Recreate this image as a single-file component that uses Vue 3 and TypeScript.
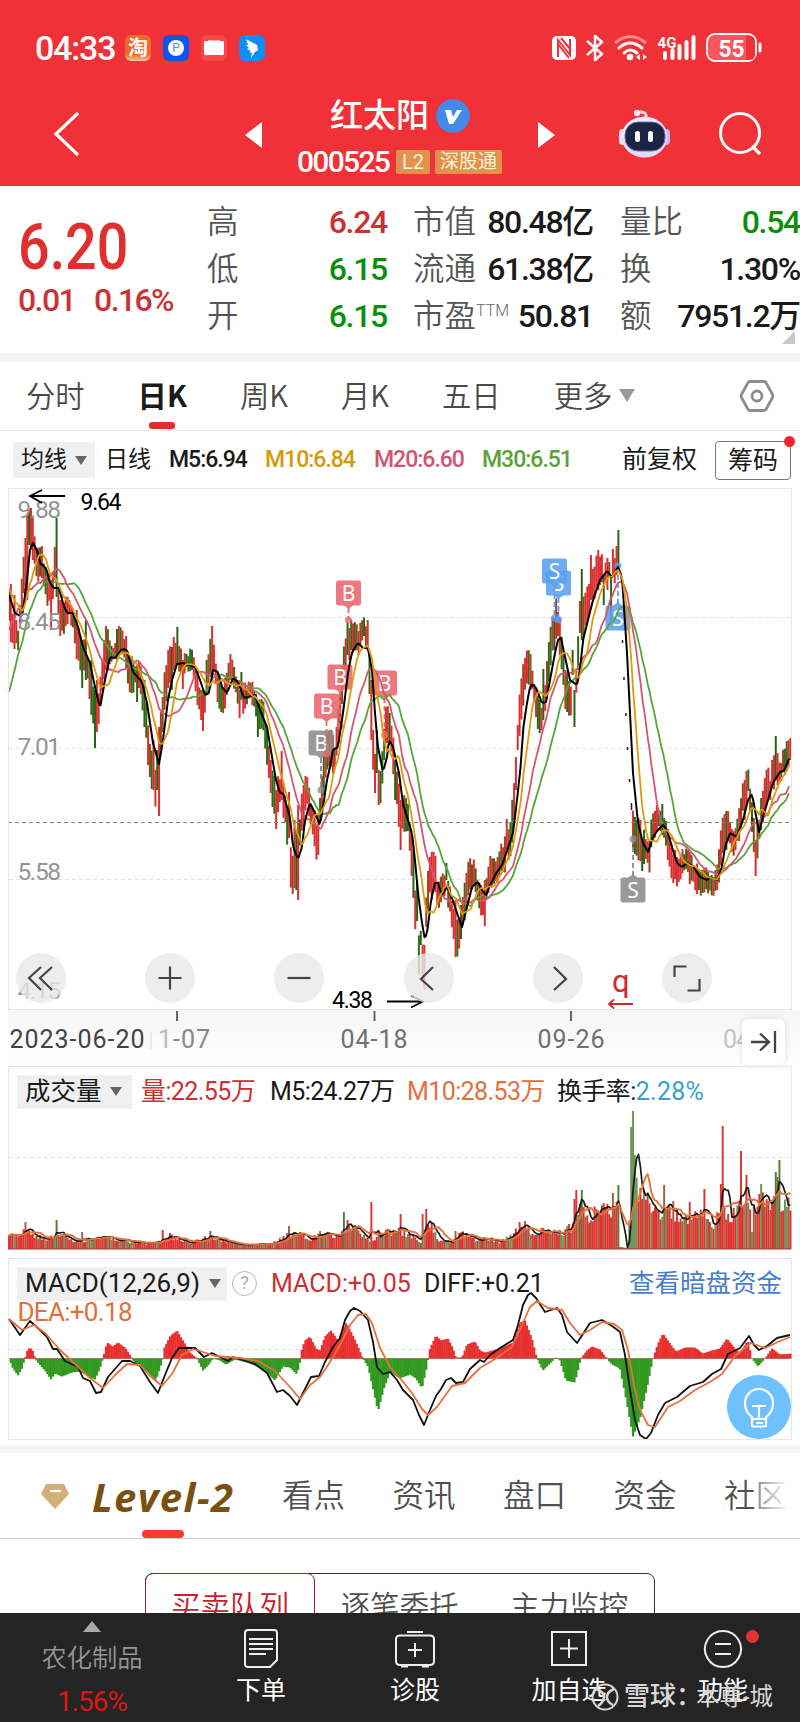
<template>
  <div class="page">
    <header class="header">
      <div class="status">
        <span class="clock">04:33</span>
        <span class="app-icon taobao">淘</span>
        <span class="app-icon parking"><i>P</i></span>
        <span class="app-icon video">
          <svg width="26" height="26" viewBox="0 0 26 26">
            <path d="M3 6q3 1 5-1q5 1 10 0q2 2 5 1v13q-2 2-4 1H7q-3 1-4-1z" fill="#fff" />
          </svg>
        </span>
        <span class="app-icon ding">
          <svg width="26" height="26" viewBox="0 0 26 26">
            <path d="M7 4l11 6 1 5-3 2-4 6 1-5-3-1 2-1-4-2 2-1-3-3 2 0z" fill="#fff" />
          </svg>
        </span>
        <svg class="status-right" width="212" height="30" viewBox="551 33 212 30">
          <rect x="552" y="36" width="24" height="24" rx="5" fill="#fff" />
          <path d="M558 57V40l12 15V39M558 44l11 14M561 38l10 12" fill="none" stroke="#f03138" stroke-width="2" />
          <path d="M587 41l15 13-7 6V36l7 6-15 13" fill="none" stroke="#fff" stroke-width="2.5" stroke-linejoin="round" />
          <path d="M615 43q15-13 31 0" fill="none" stroke="#f98a8d" stroke-width="3" />
          <path d="M619 48q11-10 23 0M624 53q6-6 13 0" fill="none" stroke="#fff" stroke-width="3" stroke-linecap="round" />
          <circle cx="630" cy="57" r="3.3" fill="#fff" />
          <path d="M640 54l-4 3 4 3zM643 54l4 3-4 3z" fill="#fff" />
          <text x="657.500" y="48" class="net" textLength="19" lengthAdjust="spacingAndGlyphs">4G</text>
          <path d="M665 53v5M672.500 50v8M679.500 46v12M686.500 42v16M693.500 37v21" stroke="#fff" stroke-width="4" stroke-linecap="round" />
          <rect x="707" y="34" width="49" height="27" rx="8" fill="#f6565c" stroke="#fff" stroke-width="1.800" />
          <path d="M746 36h3q6 0 6 6v12q0 6-6 6h-3z" fill="#f03138" />
          <path d="M760 44v7" stroke="#fff" stroke-width="3" stroke-linecap="round" />
          <text x="718.500" y="57" class="battery" textLength="26" lengthAdjust="spacingAndGlyphs">55</text>
        </svg>
      </div>
      <div class="titlebar">
        <svg class="back" width="28" height="48" viewBox="0 0 28 48">
          <path d="M25 3L3 24l22 21" fill="none" stroke="#fff" stroke-width="3.200" />
        </svg>
        <svg class="prev" width="17" height="26" viewBox="0 0 17 26"><path d="M17 0v26L0 13z" fill="#fff" /></svg>
        <div class="title">
          <div class="name">
            红太阳
            <svg width="34" height="34" viewBox="0 0 34 34">
              <circle cx="17" cy="17" r="16.800" fill="#438ae8" />
              <path d="M9 11h6l2 7 4-7h5l-9 14h-4z" fill="#fff" />
            </svg>
          </div>
          <div class="code">
            <b>000525</b><span class="tag l2">L2</span><span class="tag">深股通</span>
          </div>
        </div>
        <svg class="next" width="17" height="26" viewBox="0 0 17 26"><path d="M0 0v26l17-13z" fill="#fff" /></svg>
        <svg class="robot" width="54" height="50" viewBox="0 0 54 50">
          <path d="M28 9V6q-1-3-6-3" fill="none" stroke="#fbd3e0" stroke-width="3" stroke-linecap="round" />
          <circle cx="19" cy="4" r="3.200" fill="#ffe9ef" />
          <rect x="1" y="20" width="9" height="16" rx="4" fill="#f3e4f8" />
          <rect x="43" y="20" width="9" height="16" rx="4" fill="#c8b5f2" />
          <ellipse cx="26.500" cy="28" rx="23" ry="20.500" fill="#e4dcfa" />
          <ellipse cx="26" cy="25.500" rx="21" ry="17" fill="#faf5ff" opacity=".7" />
          <rect x="7" y="13" width="40" height="29" rx="13" fill="#1c2444" stroke="#6e6cb8" />
          <rect x="17" y="22" width="5" height="11" rx="2.500" fill="#fff" />
          <rect x="30" y="22" width="5" height="11" rx="2.500" fill="#fff" />
        </svg>
        <svg class="search" width="46" height="46" viewBox="0 0 46 46">
          <circle cx="22" cy="22" r="19.500" fill="none" stroke="#fff" stroke-width="3" />
          <path d="M34 35l8 8" stroke="#fff" stroke-width="3.200" />
        </svg>
      </div>
    </header>

    <section class="quote">
      <div class="price">
        <div class="last">6.20</div>
        <div class="change"><span>0.01</span><span>0.16%</span></div>
      </div>
      <div v-for="(col, i) in stats" :key="i" class="stat-col" :class="'col' + i">
        <div v-for="s in col" :key="s.label" class="stat">
          <span class="label">{{ s.label }}<sup v-if="s.sup">{{ s.sup }}</sup></span>
          <span class="value" :class="s.tone">{{ s.value }}</span>
        </div>
      </div>
      <i class="corner"></i>
    </section>

    <nav class="periods">
      <span v-for="p in periods" :key="p" :class="{ active: p === '日K' }">{{ p }}</span>
      <i class="caret"></i>
      <svg width="34" height="32" viewBox="0 0 34 32">
        <path d="M10 1.500h14q1 0 2 1l6.500 12q.7 1.500 0 3L26 29.500q-1 1-2 1H10q-1 0-2-1L1.500 17.500q-.7-1.500 0-3L8 2.500q1-1 2-1z" fill="none" stroke="#8c8c8c" stroke-width="2.800" />
        <circle cx="17" cy="16" r="5" fill="none" stroke="#8c8c8c" stroke-width="2.800" />
      </svg>
    </nav>

    <div class="ma-row">
      <span class="picker">均线<i></i></span>
      <span class="day">日线</span>
      <span class="m5">M5:6.94</span>
      <span class="m10">M10:6.84</span>
      <span class="m20">M20:6.60</span>
      <span class="m30">M30:6.51</span>
      <span class="adjust">前复权</span>
      <span class="chips">筹码<i></i></span>
    </div>

    <div class="kline">
      <svg width="784" height="522" viewBox="8 488 784 522">
        <g stroke="#e2e2e2" stroke-dasharray="4 3">
          <path d="M9 617.500H791M9 748.500H791M9 879.500H791" />
        </g>
        <path v-for="(c, i) in candles" :key="i" :d="`M${c.x} ${c.top}V${c.bottom}`" :stroke="c.color" stroke-width="2" />
        <path d="M8 822.500H791" stroke="#8b7d63" stroke-dasharray="4 3" />
        <path d="M622.500 640v3M624 677v3M626 713v3M627.500 747v3M629.500 779v3M631.500 803v7M752 817v4" stroke="#222" stroke-width="1.500" />
        <g v-for="m in markers" :key="m.x + '-' + m.y">
          <path :d="`M${m.x} ${m.up ? m.y - 14 : m.y + 15}V${m.stem}`" :stroke="m.fill" stroke-width="1.800" stroke-dasharray="5 3" />
          <circle :cx="m.x" :cy="m.stem" r="3.500" :fill="m.fill" opacity=".8" />
          <rect :x="m.x - 12.500" :y="m.y - 12.500" width="25" height="25" rx="2.500" :fill="m.fill" opacity=".88" />
          <path :d="m.up ? `M${m.x - 5} ${m.y - 12}l5-4l5 4z` : `M${m.x - 5} ${m.y + 12}l5 4l5-4z`" :fill="m.fill" opacity=".88" />
          <text :x="m.x" :y="m.y + 7.500" class="mark">{{ m.text }}</text>
        </g>
        <g fill="none" stroke-width="1.800" stroke-linejoin="round">
          <path :d="maPath(6)" stroke="#55a538" />
          <path :d="maPath(4)" stroke="#d5576d" />
          <path :d="maPath(1)" stroke="#000" stroke-width="2" />
          <path :d="maPath(2)" stroke="#dd9a0c" />
        </g>
        <g class="scale">
          <text v-for="l in priceLabels" :key="l.text" x="17.500" :y="l.y" textLength="43.500">{{ l.text }}</text>
        </g>
        <g class="extreme">
          <path d="M30 496h35M42 490l-12 6 12 7" />
          <text x="80.500" y="509.500" textLength="41">9.64</text>
          <path d="M387 1001.500h35M411 995.500l12 6-12 6" />
          <text x="332" y="1008" textLength="41">4.38</text>
        </g>
        <text x="612" y="992" class="q">q</text>
        <path d="M633 1004h-24M614 999.500l-5 4.500 5 4.500" fill="none" stroke="#cf2a2c" stroke-width="1.800" />
      </svg>
      <div class="controls">
        <span v-for="d in controls" :key="d">
          <svg width="50" height="50" viewBox="0 0 50 50"><path :d="d" fill="none" stroke="#444" stroke-width="2.200" /></svg>
        </span>
      </div>
    </div>

    <div class="axis">
      <svg width="792" height="56" viewBox="8 1010 792 56">
        <path d="M177 1011v10M374.500 1011v10M571 1011v10" stroke="#666" stroke-width="2" />
        <text x="9.500" y="1048" textLength="135" fill="#444">2023-06-20</text>
        <path d="M151 1032v17" stroke="#ddd" />
        <text x="158" y="1048" textLength="52"><tspan fill="#bbb">1</tspan><tspan fill="#888">-07</tspan></text>
        <text x="340.500" y="1048" textLength="67" fill="#707070">04-18</text>
        <text x="537.500" y="1048" textLength="67" fill="#707070">09-26</text>
        <text x="723" y="1048" textLength="27" fill="#c4c4c4">04</text>
      </svg>
      <span class="jump">
        <svg width="26" height="24" viewBox="0 0 26 24"><path d="M0 12h18M9 3.500l9 8.500-9 8.500M24 1v22" fill="none" stroke="#444" stroke-width="2.300" /></svg>
      </span>
    </div>

    <div class="volume">
      <div class="legend">
        <span class="picker">成交量<i></i></span>
        <span class="red v1">量:22.55万</span>
        <span class="v2">M5:24.27万</span>
        <span class="orange v3">M10:28.53万</span>
        <span class="v4">换手率:<em>2.28%</em></span>
      </div>
      <svg width="784" height="143" viewBox="8 1107 784 143">
        <path d="M9 1157.500H791" stroke="#e2e2e2" stroke-dasharray="4 3" />
        <path v-for="(v, i) in volumes" :key="i" :d="`M${v.x} 1249V${1249 - v.h}`" :stroke="v.color" stroke-width="1.950" />
        <path d="M8 1249h783" stroke="#a83a32" />
        <path :d="volumePath(5)" fill="none" stroke="#1a1a1a" stroke-width="1.700" stroke-linejoin="round" />
        <path :d="volumePath(10)" fill="none" stroke="#e8703a" stroke-width="1.900" stroke-linejoin="round" />
      </svg>
    </div>

    <div class="macd">
      <div class="legend">
        <span class="picker">MACD(12,26,9)<i></i></span>
        <span class="help">?</span>
        <span class="red v1">MACD:+0.05</span>
        <span class="v2">DIFF:+0.21</span>
        <a>查看暗盘资金</a>
      </div>
      <svg width="784" height="181" viewBox="8 1258 784 181">
        <path d="M9 1349.500H791" stroke="#e2e2e2" stroke-dasharray="4 3" />
        <path v-for="(b, i) in histogram" :key="i" :d="`M${b.x} 1358.500v${-b.h}`" :stroke="b.h > 0 ? '#e82f30' : '#31991f'" stroke-width="2.300" />
        <path d="M9 1358.500H791" stroke="#7d4a1c" stroke-width=".8" opacity=".6" />
        <text x="17.500" y="1321" class="dea" textLength="115">DEA:+0.18</text>
        <path :d="linePath(diff)" fill="none" stroke="#111" stroke-width="1.800" stroke-linejoin="round" />
        <path :d="linePath(dea)" fill="none" stroke="#e8703a" stroke-width="1.800" stroke-linejoin="round" />
      </svg>
      <span class="bulb">
        <svg width="64" height="64" viewBox="0 0 64 64">
          <circle cx="32" cy="32" r="32" fill="#6ec1fc" />
          <path d="M25 50V42q-7-5-7-14a14 14 0 0 1 28 0q0 9-7 14v8q0 1.500-1.500 1.500h-11q-1.500 0-1.500-1.500zM25 31h14M32 31v13M26 44h12M29 48h7" fill="none" stroke="#fff" stroke-width="2.200" />
        </svg>
      </span>
    </div>

    <nav class="sections">
      <svg width="28" height="26" viewBox="0 0 28 26">
        <path d="M5 0h18l5 10-14 15L0 10z" fill="#d2ae7a" />
        <path d="M9 7h11" stroke="#fff" stroke-width="2.200" />
      </svg>
      <span class="level">Level-2</span>
      <span v-for="t in tabs" :key="t" class="tab">{{ t }}</span>
    </nav>

    <div class="panel">
      <div class="segment">
        <span class="on">买卖队列</span><span>逐笔委托</span><span>主力监控</span>
      </div>
    </div>

    <footer class="bar">
      <div class="sector">
        <i></i>
        <span>农化制品</span>
        <b>1.56%</b>
      </div>
      <div v-for="a in actions" :key="a.text" class="action">
        <svg width="40" height="42" viewBox="0 0 40 42"><path :d="a.icon" fill="none" stroke="#eee" stroke-width="2" /></svg>
        <span>{{ a.text }}</span>
        <i v-if="a.dot"></i>
      </div>
      <div class="watermark">
        <svg width="28" height="28" viewBox="0 0 28 28">
          <circle cx="14" cy="14" r="12.500" fill="none" stroke="#d8d8d8" stroke-width="2" />
          <path d="M5 6q8 3 8 8t-6 9M23 6q-7 3-7 8t6 8" fill="none" stroke="#d8d8d8" stroke-width="2.500" />
        </svg>
        <span class="brand">雪球：</span><span class="user">本尊-城</span>
      </div>
    </footer>
  </div>
</template>

<script setup lang="ts">
type Point = [number, number];

interface Stat {
  label: string;
  value: string;
  tone?: string;
  sup?: string;
}

interface Bar {
  x: number;
  top: number;
  bottom: number;
  color: string;
}

const STEP = 1.83; // 每根K线的宽度
const COUNT = 428;

const stats: Stat[][] = [
  [
    { label: "高", value: "6.24", tone: "up" },
    { label: "低", value: "6.15", tone: "down" },
    { label: "开", value: "6.15", tone: "down" },
  ],
  [
    { label: "市值", value: "80.48亿" },
    { label: "流通", value: "61.38亿" },
    { label: "市盈", value: "50.81", sup: "TTM" },
  ],
  [
    { label: "量比", value: "0.54", tone: "down" },
    { label: "换", value: "1.30%" },
    { label: "额", value: "7951.2万" },
  ],
];

const periods = ["分时", "日K", "周K", "月K", "五日", "更多"];
const tabs = ["看点", "资讯", "盘口", "资金", "社区"];

const priceLabels = [
  { text: "9.88", y: 517.5 },
  { text: "8.45", y: 630 },
  { text: "7.01", y: 755 },
  { text: "5.58", y: 879.5 },
  { text: "4.15", y: 998.5 },
];

const controls = [
  "M25 14L13 25l12 12M36 14L24 25l12 12",
  "M25 13.500v23M13.500 25h23",
  "M13.500 25h23",
  "M29 14L17 26l12 11",
  "M21 14l12 12-12 11",
  "M12.500 24V13.500h12M37.500 26v11.500h-12",
];

const actions = [
  { text: "下单", icon: "M7 2h26q3 0 3 3v27l-7 7H7q-3 0-3-3V5q0-3 3-3zM8 11h24M8 16h24M8 21h24M8 26h17" },
  { text: "诊股", icon: "M5 7.500h30q4 0 4 4V33q0 4-4 4H5q-4 0-4-4V11.500q0-4 4-4zM12 4h16M20 15v14M13 22h14M6 38.500h7M27 38.500h7" },
  { text: "加自选", icon: "M3 4h34v33H3zM20 11v19M11 20.500h18" },
  { text: "功能", icon: "M20 3a18 18 0 1 1-.1 0zM12 16h16M12 26h16", dot: true },
];

const RED = "#ed656b";
const GREY = "#8b8b8b";
const BLUE = "#5b9ff0";
const markers = [
  { x: 340, y: 677, text: "B", fill: RED, stem: 726 },
  { x: 321, y: 743, text: "B", fill: GREY, stem: 790 },
  { x: 326.5, y: 706, text: "B", fill: RED, stem: 754 },
  { x: 348.5, y: 593, text: "B", fill: RED, stem: 620 },
  { x: 384.5, y: 683, text: "B", fill: RED, stem: 735 },
  { x: 558.5, y: 583, text: "S", fill: BLUE, stem: 620 },
  { x: 554.5, y: 571, text: "S", fill: BLUE, stem: 618 },
  { x: 618, y: 618, text: "S", fill: BLUE, up: true, stem: 566 },
  { x: 633, y: 890, text: "S", fill: GREY, up: true, stem: 839 },
];

// 五日均线的关键点，其余均线由它推算
const m5: Point[] = [
  [-36, 838], [-27, 790], [-18, 695], [-9, 640], [0, 582], [9, 595], [15, 613], [22, 617], [27, 580], [30, 550],
  [33, 543], [37, 550], [40, 563], [46, 568], [50, 583], [54, 588], [59, 588], [63, 603], [67, 613], [73, 613],
  [78, 627], [83, 647], [90, 663], [95, 687], [100, 708], [105, 680], [110, 657], [115, 658], [122, 649], [127, 650],
  [133, 672], [142, 682], [147, 703], [153, 743], [159, 764], [163, 740], [168, 700], [172, 680], [177, 664], [183, 663],
  [195, 667], [200, 680], [205, 695], [209, 693], [213, 670], [218, 672], [222, 687], [227, 693], [233, 678], [238, 682],
  [244, 698], [255, 695], [260, 710], [267, 727], [272, 757], [276, 780], [280, 793], [283, 793], [290, 817], [293, 847],
  [298, 859], [302, 847], [305, 820], [310, 803], [315, 813], [320, 825], [323, 807], [327, 780], [330, 767], [333, 750],
  [338, 747], [343, 713], [348, 673], [352, 652], [358, 643], [363, 648], [368, 648], [372, 670], [375, 713], [378, 747],
  [383, 772], [387, 757], [389, 740], [393, 747], [399, 773], [403, 804], [407, 817], [412, 833], [415, 860], [418, 893],
  [422, 923], [425, 940], [428, 927], [431, 900], [435, 883], [438, 883], [442, 895], [447, 887], [452, 898], [457, 913],
  [462, 927], [467, 907], [472, 887], [478, 882], [482, 890], [486, 895], [490, 885], [497, 872], [502, 865], [508, 848],
  [513, 833], [517, 800], [521, 763], [523, 730], [527, 703], [530, 687], [533, 684], [537, 690], [542, 703], [546, 702],
  [550, 680], [555, 653], [558, 640], [561, 638], [565, 657], [570, 680], [577, 685], [580, 670], [583, 640], [588, 620],
  [593, 600], [600, 580], [607, 571], [612, 577], [618, 567], [622, 577], [624, 607], [627, 653], [630, 713], [633, 773],
  [635, 793], [638, 823], [643, 843], [648, 852], [653, 837], [658, 830], [663, 825], [667, 830], [672, 847], [677, 863],
  [682, 867], [687, 863], [693, 866], [700, 877], [707, 880], [710, 877], [717, 880], [722, 867], [725, 847], [730, 833],
  [737, 837], [743, 820], [748, 800], [752, 794], [755, 810], [759, 832], [763, 817], [768, 800], [773, 783], [780, 772],
  [784, 771], [790, 756], [800, 745],
];

// 影线特别长的K线：x, 最高, 最低, 是否上涨
const spikes: [number, number, number, boolean][] = [
  [11, 584, 642, true], [15, 595, 649, true], [26, 538, 600, true], [28, 515, 600, true], [30, 509, 545, false], [32, 518, 560, true],
  [42, 546, 578, true], [55, 547, 580, true], [57, 518, 597, false], [51, 580, 630, true], [60, 600, 636, true], [77, 610, 659, true], [82, 640, 688, false],
  [86, 620, 680, false], [91, 660, 715, false], [95, 690, 748, false], [97, 680, 732, true], [106, 626, 670, true], [117, 629, 660, false],
  [126, 636, 668, true], [137, 665, 702, false], [144, 680, 727, false], [153, 740, 790, true], [159, 727, 816, true], [157, 750, 790, false],
  [172, 647, 690, false], [177, 627, 665, false], [186, 654, 667, false], [182, 660, 689, true], [201, 690, 720, true], [203, 690, 731, true], [206, 660, 695, false],
  [212, 626, 680, true], [230, 654, 680, true], [241, 672, 700, false], [239, 690, 718, true], [257, 700, 737, false],
  [271, 760, 793, true], [276, 790, 829, true], [281, 751, 800, true], [289, 792, 838, true], [294, 820, 888, true], [296, 830, 890, false], [298, 805, 900, true],
  [303, 785, 830, true], [315, 810, 846, true], [319, 815, 855, true],
  [347, 622, 655, false], [350, 628, 660, true], [358, 631, 655, true], [367, 620, 650, true], [372, 680, 740, true], [376, 730, 773, false],
  [379, 770, 805, true], [389, 713, 745, false], [396, 760, 800, false], [401, 800, 850, true], [414, 850, 898, false], [418, 880, 921, false], [420, 931, 945, false],
  [423.5, 945, 989, true], [431, 852, 900, true], [436, 856, 892, true], [456, 900, 957, true], [461, 905, 939, false],
  [447, 863, 880, false], [484, 880, 926, true], [490, 856, 885, true], [507, 819, 850, true],
  [518, 725, 750, true], [516, 757, 790, true], [531, 654, 690, true], [540, 700, 733, false], [544, 669, 720, false],
  [554, 618, 650, false], [560, 617, 655, true], [565, 670, 709, true], [573, 650, 675, false], [575, 690, 727, false],
  [580, 601, 633, true], [582, 569, 640, false], [591, 555, 600, true], [598, 550, 590, true], [604, 575, 605, false], [607, 558, 590, true], [611, 575, 620, false],
  [613, 549, 575, true], [617, 546, 575, true], [619, 530, 567, false],
  [642, 840, 871, false], [663, 804, 835, false], [675, 850, 879, true], [689, 852, 884, true], [702, 870, 893, false],
  [726, 811, 850, false], [745, 780, 820, true], [747, 771, 805, true], [755, 840, 876, true],
  [770, 781, 800, true], [775, 736, 780, false], [778, 753, 785, true], [790, 738, 760, true],
];

const volumeShape: Point[] = [
  [9, 15], [27, 17], [45, 9], [57, 18], [75, 7], [100, 11], [115, 10], [140, 6], [155, 6], [170, 12],
  [190, 7], [210, 12], [220, 9], [240, 4], [270, 5], [285, 12], [295, 16], [310, 10], [325, 16], [340, 12],
  [348, 25], [357, 18], [370, 8], [385, 18], [400, 17], [415, 13], [420, 5], [425, 22], [432, 22], [440, 8],
  [450, 6], [460, 17], [475, 9], [490, 11], [500, 6], [515, 16], [525, 22], [535, 13], [545, 20], [565, 17],
  [571, 22], [578, 42], [590, 33], [600, 36], [612, 38], [617.5, 38], [619, 2], [629, 1], [630.5, 105], [634, 90],
  [637, 55], [642, 62], [650, 40], [660, 30], [670, 38], [685, 30], [700, 33], [715, 25], [723, 46], [730, 30],
  [740, 40], [747, 50], [751, 40], [760, 48], [770, 42], [780, 50], [792, 44],
];

const volumeSpikes: Point[] = [
  [26, 27], [57, 29], [82, 17], [162, 19], [170, 16], [210, 18], [289, 23], [321, 18], [343, 37], [347, 29], [372, 47],
  [401, 35], [423, 35], [427, 40], [455, 18], [525, 28], [519, 27], [574, 50], [576, 59], [582, 59], [604, 46], [613, 56],
  [618, 64], [631, 122], [633, 138], [635, 94], [664, 64], [673, 48], [690, 47], [704, 60], [720.5, 65], [722.3, 123],
  [740.5, 98], [746, 74], [752, 17], [761, 65], [775, 77], [777, 72], [779, 89],
];

const macdShape: Point[] = [
  [9, 0], [13, -10], [18, -17], [22, -10], [25, 0], [28, 10], [32, 10], [35, 1], [37, -3], [45, -12], [51, -21],
  [55, -15], [62, -18], [72, -14], [80, -13], [88, -18], [95, -21], [100, -10], [103, 0], [107, 16], [113, 12],
  [118, 16], [125, 11], [131, 2], [135, -5], [142, -8], [150, -16], [156, -22], [160, -10], [163, 0], [164, 10],
  [170, 22], [177, 28], [183, 18], [190, 6], [197, 0], [203, -12], [209, -6], [213, 0], [220, -2], [226, -6],
  [235, -1], [247, -4], [262, -10], [275, -22], [283, -8], [290, -9], [297, -16], [300, -4], [302, 10], [305, 18],
  [310, 22], [316, 10], [320, 8], [325, 22], [331, 28], [338, 18], [346, 36], [352, 25], [358, 12], [363, 0],
  [368, -8], [373, -30], [378, -53], [384, -30], [390, -14], [400, -20], [410, -16], [416, -20], [422, -30],
  [427, -8], [430, 10], [436, 23], [441, 18], [448, 20], [453, 10], [456, 1], [462, 1], [467, 14], [475, 17],
  [480, 8], [485, 6], [500, 10], [513, 16], [520, 36], [525, 38], [532, 20], [537, 0], [543, -12], [550, -5],
  [556, 1], [560, -2], [566, -22], [575, -24], [581, 0], [587, 8], [592, 12], [600, 9], [606, 1], [612, -6],
  [620, -10], [625, -35], [633, -78], [640, -60], [648, -25], [653, 0], [658, 15], [663, 25], [670, 15],
  [676, 7], [685, 11], [695, 11], [703, 5], [712, 8], [720, 10], [727, 20], [735, 10], [740, 6], [748, 18],
  [752, 0], [758, -8], [765, 0], [772, 10], [780, 4], [792, 5],
];

const diff: Point[] = [
  [9, 1319], [20, 1335], [30, 1321], [40, 1330], [47, 1337], [53, 1349], [57, 1349], [65, 1361], [78, 1367], [83, 1378],
  [90, 1381], [96, 1393], [101, 1392], [108, 1377], [115, 1369], [122, 1361], [130, 1361], [140, 1366], [150, 1382],
  [158, 1393], [165, 1375], [172, 1358], [179, 1348], [195, 1348], [204, 1357], [212, 1353], [228, 1361], [233, 1357],
  [255, 1364], [267, 1373], [277, 1392], [283, 1390], [290, 1396], [297, 1405], [303, 1393], [311, 1377], [319, 1376],
  [325, 1362], [333, 1347], [340, 1338], [345, 1320], [350, 1311], [354, 1308], [360, 1311], [368, 1320], [373, 1342],
  [377, 1367], [383, 1374], [390, 1372], [397, 1380], [403, 1390], [413, 1400], [419, 1415], [424, 1425], [430, 1410],
  [436, 1396], [441, 1389], [446, 1380], [451, 1378], [456, 1383], [463, 1382], [470, 1369], [480, 1360], [484, 1362],
  [490, 1355], [500, 1348], [513, 1340], [518, 1325], [523, 1305], [528, 1295], [531, 1293], [536, 1298], [545, 1312],
  [557, 1308], [562, 1315], [567, 1332], [577, 1343], [583, 1334], [590, 1323], [602, 1320], [612, 1326], [620, 1332],
  [625, 1355], [630, 1390], [635, 1420], [640, 1435], [646, 1439], [651, 1433], [658, 1415], [665, 1403], [677, 1397],
  [690, 1386], [703, 1382], [712, 1374], [721, 1369], [728, 1354], [740, 1348], [749, 1336], [754, 1345], [759, 1350],
  [767, 1346], [777, 1338], [790, 1335],
];

const dea: Point[] = [
  [9, 1319], [22, 1330], [34, 1325], [45, 1333], [60, 1350], [75, 1364], [90, 1378], [103, 1388], [115, 1375],
  [127, 1364], [140, 1365], [150, 1376], [162, 1386], [172, 1374], [182, 1355], [193, 1349], [203, 1352], [215, 1356],
  [240, 1358], [258, 1361], [275, 1371], [290, 1387], [300, 1399], [310, 1385], [320, 1377], [330, 1362], [340, 1345],
  [350, 1325], [358, 1315], [366, 1314], [372, 1323], [380, 1348], [390, 1367], [400, 1378], [412, 1393], [422, 1409],
  [428, 1415], [437, 1407], [452, 1386], [465, 1383], [480, 1368], [495, 1359], [512, 1347], [522, 1325], [530, 1307],
  [537, 1301], [548, 1308], [562, 1310], [570, 1323], [580, 1335], [590, 1330], [602, 1322], [614, 1324], [622, 1330],
  [628, 1350], [634, 1385], [640, 1410], [648, 1425], [655, 1427], [668, 1407], [680, 1401], [695, 1390], [710, 1382],
  [722, 1374], [735, 1356], [751, 1343], [765, 1348], [778, 1342], [790, 1337],
];

// 线性插值
function at(points: Point[], x: number): number {
  if (x <= points[0][0]) return points[0][1];
  for (let i = 1; i < points.length; i++) {
    const [x1, y1] = points[i];
    if (x <= x1) {
      const [x0, y0] = points[i - 1];
      return y0 + ((y1 - y0) * (x - x0)) / (x1 - x0);
    }
  }
  return points[points.length - 1][1];
}

// 固定种子的伪随机数，保证每次绘制一致
function noise(n: number): number {
  const v = Math.sin(n * 127.1 + 11.7) * 43758.5453;
  return v - Math.floor(v);
}

function barX(i: number): number {
  return 9 + i * STEP;
}

function maPath(windows: number): string {
  let d = "";
  for (let x = 9; x <= 790; x += 1.5) {
    let sum = 0;
    for (let k = 0; k < windows; k++) sum += at(m5, x - k * 9.15);
    d += `${d ? "L" : "M"}${x} ${(sum / windows).toFixed(1)}`;
  }
  return d;
}

function linePath(points: Point[]): string {
  return points.map(([x, y], i) => `${i ? "L" : "M"}${x} ${y}`).join("");
}

function buildCandles(): Bar[] {
  const bars: Bar[] = [];
  for (let i = 0; i < COUNT; i++) {
    const x = barX(i);
    const green = noise(i) < 0.3;
    const spike = spikes.find((s) => Math.abs(s[0] - x) < STEP / 2);
    if (spike) {
      bars.push({ x, top: spike[1], bottom: spike[2], color: spike[3] ? "#d8302f" : "#2b6314" });
      continue;
    }
    if (x > 619.5 && x < 632) continue;
    let mid = 1.5 * at(m5, x + 3.7) - 0.25 * (at(m5, x - 5.5) + at(m5, x + 13));
    if (x > 604 && x < 621) mid = 570;
    if (x >= 632 && x < 650) mid = 828 + (x - 632) * 1.6;
    const half = 5 + Math.min(9, Math.abs(at(m5, x + 2) - at(m5, x - 2)) * 0.5);
    const color = green ? "#2f6b18" : noise(i + 900) < 0.35 ? "#96451f" : "#dc2f2f";
    bars.push({ x, top: mid - half - noise(i + 300) * 9, bottom: mid + half + noise(i + 600) * 8, color });
  }
  return bars;
}

function buildVolumes() {
  const list: { x: number; h: number; color: string }[] = [];
  for (let i = 0; i < COUNT; i++) {
    const x = barX(i);
    const spike = volumeSpikes.find((s) => Math.abs(s[0] - x) <= STEP / 2);
    const h = spike ? spike[1] : at(volumeShape, x) * (0.75 + noise(i + 40) * 0.5);
    const r = noise(i);
    let color = r < 0.18 ? "#6a9457" : r < 0.42 ? "#ab5b3f" : "#e13230";
    if (x > 629 && x < 636) color = "#6a9457";
    if (spike && [57, 343, 582, 618, 775, 779].includes(spike[0])) color = "#4c7d39";
    list.push({ x, h, color });
  }
  return list;
}

const candles = buildCandles();
const volumes = buildVolumes();
const histogram = Array.from({ length: COUNT }, (_, i) => ({ x: barX(i), h: at(macdShape, barX(i)) }));

function volumePath(n: number): string {
  return volumes
    .map((v, i) => {
      const part = volumes.slice(Math.max(0, i - n + 1), i + 1);
      const avg = part.reduce((sum, p) => sum + p.h, 0) / part.length;
      return `${i ? "L" : "M"}${v.x.toFixed(1)} ${(1249 - avg).toFixed(1)}`;
    })
    .join("");
}
</script>

<style>
body {
  background: #fff;
}
</style>

<style scoped>
.page {
  width: 800px;
  height: 1722px;
  overflow: hidden;
  display: flex;
  flex-direction: column;
  background: #fff;
  color: #1a1a1a;
  font-family: Roboto, "Noto Sans CJK SC", sans-serif;
  line-height: 1.2;
  white-space: nowrap;
}

.page > * {
  box-sizing: border-box;
  flex: none;
}

svg {
  display: block;
}

i,
em {
  font-style: normal;
}

/* 顶部 */
.header {
  height: 186px;
  background: #f03138;
  color: #fff;
}

.status {
  height: 60px;
  padding: 18px 37px 0 35px;
  display: flex;
  align-items: center;
}

.clock {
  width: 90px;
  font-size: 34px;
  font-weight: 500;
  letter-spacing: -1.2px;
}

.app-icon {
  width: 26px;
  height: 26px;
  margin-right: 12px;
  border-radius: 6px;
  display: flex;
  align-items: center;
  justify-content: center;
  overflow: hidden;
}

.taobao {
  background: linear-gradient(#ef6a25 75%, #f5c7a5);
  font-size: 20px;
  font-weight: 700;
}

.parking {
  background: #0a55ee;
}

.parking i {
  width: 16px;
  height: 16px;
  border-radius: 50%;
  background: #fff;
  color: #5d8bea;
  font-size: 12px;
  line-height: 16px;
  text-align: center;
}

.video {
  background: #fb4549;
}

.ding {
  background: #0d8ff5;
}

.status-right {
  margin-left: auto;
}

.net {
  font: 700 15px Roboto, sans-serif;
  fill: #fff;
}

.battery {
  font: 700 24px Roboto, sans-serif;
  fill: #fff;
}

.titlebar {
  height: 107px;
  display: grid;
  grid-template-columns: 245px 45px 220px 80px 110px 100px;
  align-items: center;
  padding-top: 4px;
  box-sizing: border-box;
}

.back {
  margin-left: 53px;
}

.prev {
  margin-top: 3px;
}

.title {
  padding-top: 10px;
}

.next {
  margin-left: 28px;
  margin-top: 3px;
}

.robot {
  margin-left: 28px;
}

.search {
  margin-left: 18px;
}

.name {
  display: flex;
  align-items: center;
  gap: 7px;
  padding-left: 40px;
  height: 46px;
  font-size: 33px;
  font-weight: 500;
}

.code {
  display: flex;
  align-items: center;
  height: 45px;
  padding-left: 7px;
}

.code b {
  width: 99px;
  font-size: 30px;
  font-weight: 500;
  letter-spacing: -1.7px;
}

.tag {
  height: 24px;
  line-height: 24px;
  padding: 0 5px;
  border-radius: 2px;
  background: #e2924c;
  color: #fff3d8;
  font-size: 19px;
}

.tag.l2 {
  margin-right: 5px;
  padding: 0 6px;
  font-size: 20px;
}

/* 行情 */
.quote {
  height: 176px;
  display: flex;
  border-bottom: 9px solid #f4f4f4;
  position: relative;
}

.price {
  width: 207px;
  padding-left: 18px;
  box-sizing: border-box;
}

.last {
  height: 78px;
  margin-top: 23px;
  font-size: 64px;
  line-height: 78px;
  font-weight: 500;
  color: #e12f2f;
  transform: scaleX(0.87);
  transform-origin: left;
}

.change {
  display: flex;
  gap: 19px;
  font-size: 32px;
  line-height: 32px;
  margin-top: -3px;
  font-weight: 500;
  color: #c83436;
  letter-spacing: -1.6px;
}

.stat-col {
  padding-top: 13px;
}

.col0 {
  width: 180px;
}

.col1 {
  width: 180px;
  margin-left: 26px;
}

.col2 {
  width: 180px;
  margin-left: 27px;
}

.stat {
  height: 47px;
  display: flex;
  justify-content: space-between;
  align-items: center;
}

.label {
  font-size: 31.5px;
  color: #555;
  display: flex;
  font-weight: 350;
}

.label sup {
  font-size: 16px;
  line-height: 26px;
  color: #666;
}

.value {
  font-size: 32px;
  font-weight: 500;
  letter-spacing: -1.3px;
}

.up {
  color: #cb3033;
}

.down {
  color: #0a8f0a;
}

.corner {
  position: absolute;
  right: 5px;
  bottom: 9px;
  border-left: 13px solid transparent;
  border-bottom: 13px solid #c8c8c8;
}

/* 周期 */
.periods {
  height: 69px;
  display: flex;
  align-items: center;
  gap: 53px;
  padding: 0 26px 2px 26px;
  border-bottom: 1px solid #e8e8e8;
  font-size: 29.3px;
  font-weight: 350;
  color: #4a4a4a;
  font-family: "Noto Sans CJK SC", sans-serif;
}

.periods span {
  position: relative;
}

.periods .active {
  font-weight: 700;
  color: #1a1a1a;
}

.periods .active::after {
  content: "";
  position: absolute;
  left: 50%;
  bottom: -16px;
  width: 26px;
  height: 7px;
  margin-left: -13px;
  border-radius: 3px;
  background: #e12f30;
}

.caret {
  margin-left: -46px;
  border: 8px solid transparent;
  border-top: 13px solid #999;
  border-bottom: 0;
}

.periods svg {
  margin-left: auto;
  margin-top: 1px;
}

/* 均线 */
.ma-row {
  height: 57px;
  display: grid;
  grid-template-columns: 92px 64px 96px 109px 108px 140px 93px 76px;
  align-items: center;
  padding: 1px 0 0 13px;
  font-size: 23px;
  font-weight: 500;
  letter-spacing: -1px;
}

.picker {
  display: flex;
  align-items: center;
  gap: 8px;
  height: 36px;
  width: 82px;
  padding-left: 8px;
  box-sizing: border-box;
  background: #f0f0f0;
  font-size: 23px;
  font-weight: 400;
  letter-spacing: 0;
}

.picker i {
  border: 6.5px solid transparent;
  border-top: 9px solid #666;
  border-bottom: 0;
}

.day {
  letter-spacing: 0;
  font-weight: 400;
}

.m10 {
  color: #d19a0b;
}

.m20 {
  color: #cf5670;
}

.m30 {
  color: #5aa13b;
}

.adjust {
  font-size: 25px;
  font-weight: 400;
  letter-spacing: 0;
}

.chips {
  position: relative;
  height: 39px;
  line-height: 37px;
  box-sizing: border-box;
  border: 1px solid #777;
  border-radius: 4px;
  text-align: center;
  font-size: 25px;
  font-weight: 400;
  letter-spacing: 0;
}

.chips i {
  position: absolute;
  right: -5px;
  top: -6px;
  width: 11px;
  height: 11px;
  border-radius: 50%;
  background: #fb2130;
}

/* K线图 */
.kline {
  position: relative;
  height: 522px;
  width: 784px;
  margin-left: 8px;
  outline: 1px solid #e6e6e6;
  outline-offset: -1px;
}

.mark {
  font: 21px "Noto Sans", sans-serif;
  fill: #fff;
  text-anchor: middle;
}

.scale {
  font-size: 24.5px;
  fill: #949494;
}

.extreme {
  font-size: 23px;
  fill: #000;
}

.extreme path {
  fill: none;
  stroke: #000;
  stroke-width: 1.8;
}

.q {
  font-size: 31px;
  fill: #cf2a2c;
}

.controls {
  position: absolute;
  left: 8px;
  bottom: 7px;
  width: 696px;
  display: flex;
  justify-content: space-between;
}

.controls span {
  border-radius: 50%;
  background: rgba(232, 232, 232, 0.8);
}

.axis {
  height: 56px;
  margin-left: 8px;
  position: relative;
  background: linear-gradient(#f5f5f5, #fff);
  font-size: 25px;
}

.jump {
  position: absolute;
  right: 15px;
  top: 9px;
  width: 43px;
  height: 46px;
  border-radius: 6px;
  background: #fff;
  box-shadow: 0 0 6px rgba(0, 0, 0, 0.12);
  display: flex;
  align-items: center;
  justify-content: center;
}

/* 成交量 */
.volume,
.macd {
  width: 784px;
  margin-left: 8px;
  border: 1px solid #e6e6e6;
  position: relative;
}

.volume {
  height: 184px;
  border-bottom: 0;
}

.volume > svg,
.macd > svg {
  margin-left: -1px;
}

.legend {
  display: flex;
  align-items: center;
  height: 40px;
  padding: 5px 0 0 8px;
  box-sizing: border-box;
  font-size: 25px;
  letter-spacing: -0.6px;
}

.volume .legend {
  padding-top: 9px;
}

.volume .picker {
  width: 115px;
  height: 34px;
  font-size: 25.5px;
}

.red {
  color: #cb3033;
}

.orange {
  color: #e07040;
}

.volume .v1 {
  margin-left: 9px;
  width: 129px;
}

.volume .v2 {
  width: 137px;
}

.volume .v3 {
  width: 150px;
}

.volume em {
  color: #3a9fd0;
  letter-spacing: 0.3px;
}

/* MACD */
.macd {
  height: 182px;
  margin-top: 8px;
}

.macd .legend {
  position: absolute;
  left: 0;
  right: 0;
  top: 2px;
  letter-spacing: 0;
}

.macd > svg {
  margin-top: -1px;
}

.macd .picker {
  width: 210px;
  height: 34px;
  gap: 9px;
  font-size: 26px;
}

.help {
  width: 25px;
  height: 25px;
  margin-left: 5px;
  border: 1.5px solid #b4b4b4;
  border-radius: 50%;
  box-sizing: border-box;
  color: #aaa;
  font-size: 19px;
  line-height: 22px;
  text-align: center;
}

.macd .v1 {
  margin-left: 14px;
  width: 153px;
}

.macd a {
  margin-left: auto;
  margin-right: 9px;
  color: #467ecb;
  letter-spacing: 0;
  font-size: 25.5px;
}

.dea {
  font-size: 26px;
  fill: #e07040;
}

.bulb {
  position: absolute;
  right: 0;
  bottom: 0;
}

/* 栏目 */
.sections {
  height: 94px;
  margin-top: 5px;
  border-top: 8px solid #f4f4f4;
  border-bottom: 1px solid #ccc;
  display: flex;
  align-items: center;
  padding: 2px 0 0 41px;
  position: relative;
  overflow: hidden;
}

.sections > svg {
  flex: none;
}

.sections::after {
  content: "";
  position: absolute;
  right: 0;
  top: 0;
  width: 46px;
  height: 80px;
  background: linear-gradient(to right, rgba(255, 255, 255, 0.3), #fff 75%);
}

.level {
  position: relative;
  flex: none;
  width: 213px;
  padding-left: 23px;
  box-sizing: border-box;
  color: #79500f;
  font: italic 700 40px "Open Sans", sans-serif;
  letter-spacing: 1.4px;
}

.level::after {
  content: "";
  position: absolute;
  left: 73px;
  bottom: -14px;
  width: 42px;
  height: 8px;
  border-radius: 4px;
  background: #f53a30;
}

.tab {
  width: 110.5px;
  flex: none;
  font-size: 31.5px;
  font-weight: 350;
  color: #505050;
}

.panel {
  height: 74px;
  padding: 34px 0 0 145px;
  overflow: hidden;
}

.segment {
  width: 510px;
  height: 60px;
  box-sizing: border-box;
  display: grid;
  grid-template-columns: 169px 1fr 1fr;
  border: 1px solid #333;
  border-radius: 8px;
  font-size: 29.5px;
  font-weight: 350;
  line-height: 67px;
  text-align: center;
  color: #505050;
}

.segment .on {
  margin: -1px 0 0 -1px;
  border: 1px solid #a01c28;
  border-radius: 8px;
  color: #c8202c;
}

/* 底栏 */
.bar {
  height: 109px;
  display: grid;
  grid-template-columns: 184px repeat(4, 154px);
  background: #242424;
  position: relative;
}

.sector {
  display: flex;
  flex-direction: column;
  align-items: center;
  padding-top: 8px;
}

.sector i {
  border: 9.5px solid transparent;
  border-bottom: 11px solid #aaa;
  border-top: 0;
}

.sector span {
  height: 49px;
  line-height: 53px;
  font-size: 25.3px;
  font-weight: 350;
  color: #969696;
}

.sector b {
  font-size: 28px;
  font-weight: 400;
  line-height: 42px;
  letter-spacing: -1px;
  color: #dc1712;
}

.action {
  position: relative;
  display: flex;
  flex-direction: column;
  align-items: center;
  padding-top: 15px;
  color: #fff;
}

.action span {
  font-size: 25px;
  line-height: 41px;
}

.action i {
  position: absolute;
  left: 100px;
  top: 17px;
  width: 13px;
  height: 13px;
  border-radius: 50%;
  background: #e63232;
}

.watermark {
  position: absolute;
  left: 591px;
  top: 69px;
  height: 30px;
  display: flex;
  align-items: center;
  color: #d8d8d8;
}

.brand {
  width: 72px;
  margin-left: 5px;
  font-size: 26px;
  font-weight: 500;
}

.user {
  font-size: 23.5px;
}
</style>
